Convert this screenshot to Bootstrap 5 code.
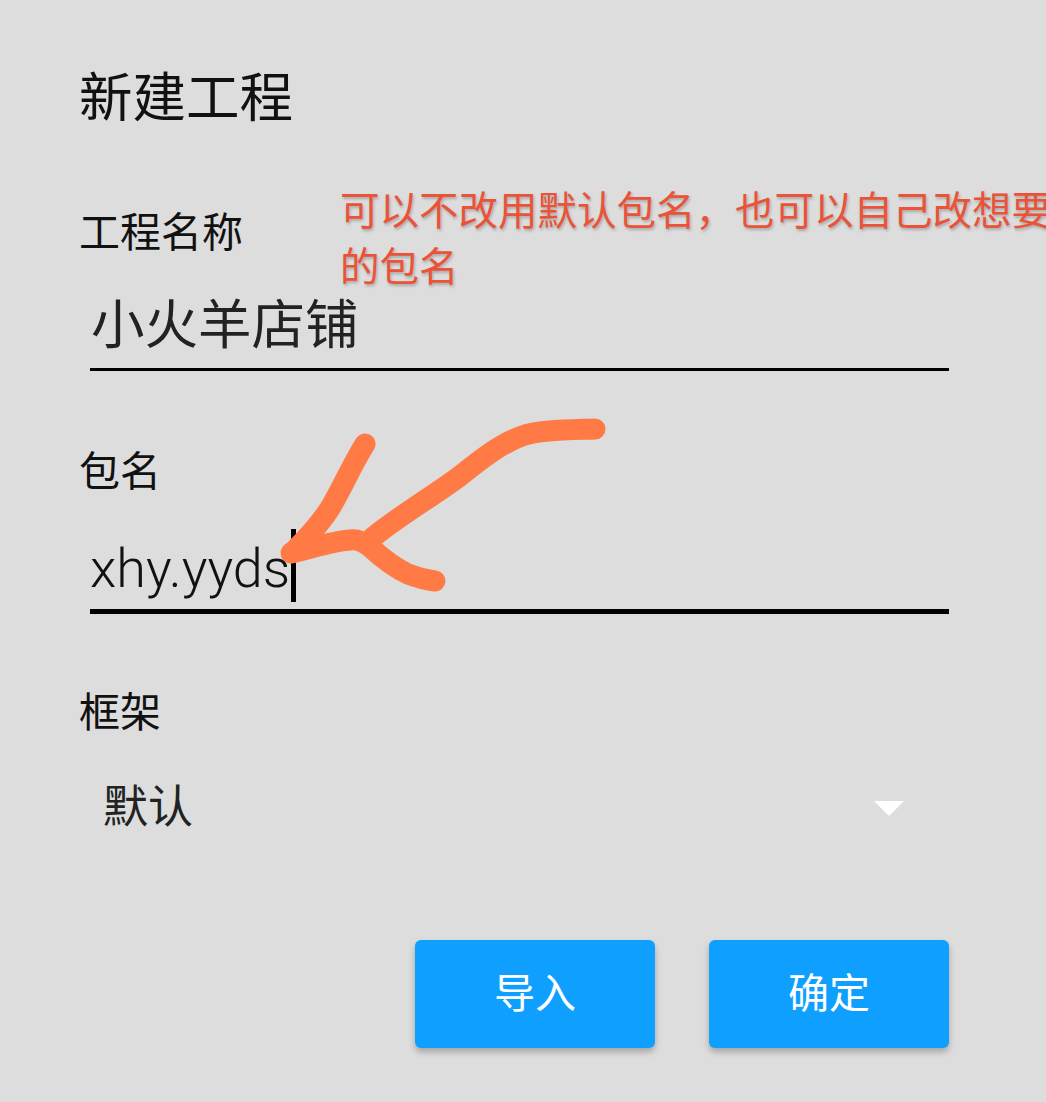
<!DOCTYPE html>
<html lang="zh">
<head>
<meta charset="utf-8">
<title>新建工程</title>
<link rel="stylesheet" href="https://cdn.jsdelivr.net/npm/bootstrap@5.3.0/dist/css/bootstrap.min.css">
<style>
html,body{height:100%;}
body{background:#dddddd;overflow:hidden;font-family:Roboto,"Noto Sans CJK SC",sans-serif;color:#111;}
.dlg{position:relative;width:1046px;height:1102px;padding:66px 97px 0 79px;}
.dlg-title{font-size:53.5px;line-height:66px;margin:0 0 73px;font-weight:400;color:#111;}
.fld-label{font-size:41px;line-height:56px;color:#111;}
.fld-input{margin-left:11px;border-bottom:3px solid #000;color:#222;}
.fld-name{font-size:53.5px;line-height:74px;height:82px;padding:0 0 0 1px;margin-top:28px;margin-bottom:73px;}
.fld-pkg{font-size:54px;font-weight:300;height:91px;border-bottom-width:5px;line-height:91px;margin-top:23px;margin-bottom:71px;color:#111;}
.caret-bar{display:inline-block;width:5px;height:73px;background:#000;vertical-align:-15px;margin-left:1px;}
.sel{font-size:45px;line-height:60px;color:#222;padding:0 45px 0 24px;margin-top:37px;}
.sel-arrow{width:0;height:0;border-left:15px solid transparent;border-right:15px solid transparent;border-top:15px solid #fff;}
.acts{margin-top:102px;gap:54px;}
.act-btn{width:240px;height:108px;background:#0f9fff;border:0;border-radius:6px;color:#fff;font-size:41px;box-shadow:0 4px 6px rgba(0,0,0,.25);padding:2px 0 0;}
.act-btn:hover,.act-btn:active{background:#0f9fff!important;color:#fff!important;}
.note{position:absolute;left:340px;top:184px;font-size:39.5px;line-height:56px;color:#ea5338;white-space:nowrap;text-shadow:1px 2px 3px rgba(0,0,0,.25);}
.scrib{position:absolute;left:0;top:0;pointer-events:none;}
</style>
</head>
<body>
<div class="dlg">
  <h1 class="dlg-title">新建工程</h1>
  <div class="fld-label">工程名称</div>
  <div class="fld-input fld-name">小火羊店铺</div>
  <div class="fld-label">包名</div>
  <div class="fld-input fld-pkg">xhy.yyds<span class="caret-bar"></span></div>
  <div class="fld-label">框架</div>
  <div class="sel d-flex justify-content-between align-items-center"><span>默认</span><span class="sel-arrow"></span></div>
  <div class="acts d-flex justify-content-end">
    <button type="button" class="btn act-btn">导入</button>
    <button type="button" class="btn act-btn">确定</button>
  </div>
  <div class="note">可以不改用默认包名，也可以自己改想要<br>的包名</div>
  <svg class="scrib" width="1046" height="1102" viewBox="0 0 1046 1102" fill="none" stroke="#ff7a45" stroke-width="21" stroke-linecap="round" stroke-linejoin="round">
    <path d="M365 444C352 465 345 482 332 505C322 522 308 537 293 552"/>
    <path d="M595 429C565 430 538 430 522 436C500 444 480 460 460 476C432 497 400 515 372 538"/>
    <path d="M291 553C310 549 332 541 350 540C358 539 364 542 370 547C382 558 395 568 408 574C418 578 427 580 435 581"/>
  </svg>
</div>
<script src="https://cdn.jsdelivr.net/npm/bootstrap@5.3.0/dist/js/bootstrap.bundle.min.js"></script>
</body>
</html>
